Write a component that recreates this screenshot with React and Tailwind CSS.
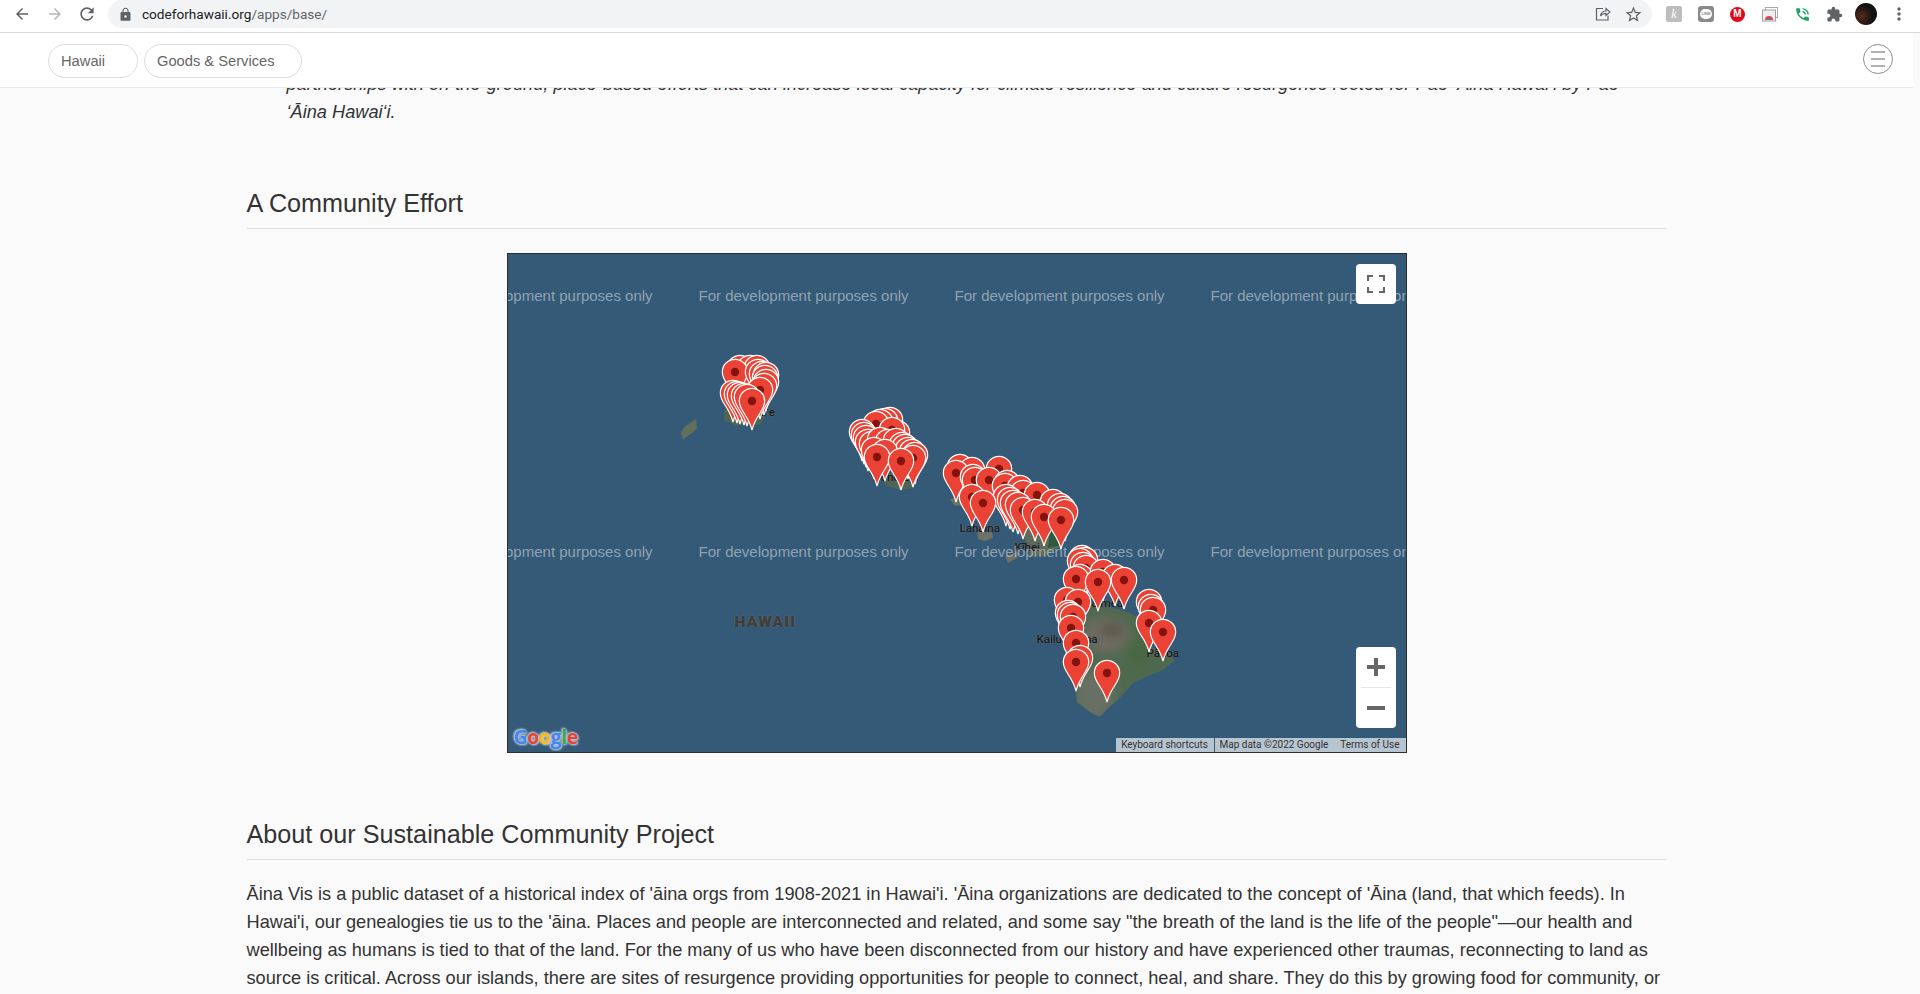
import React from "react";
import { MdArrowBack, MdArrowForward, MdRefresh, MdLock, MdStarBorder, MdExtension, MdPhoneInTalk, MdMoreVert } from "react-icons/md";

const PINS = [
  // Kauai
  [740,368],[750,368],[757,368],[735,372],[758,372],[762,374],[766,375],[765,378],[766,382],[764,386],[760,390],[733,393],[737,394],[740,395],[744,396],[747,397],[752,401],
  // Oahu
  [890,420],[885,421],[880,422],[876,424],[897,433],[892,430],[862,432],[864,435],[866,438],[868,442],[872,444],[880,440],[888,442],[896,441],[902,445],[905,447],[908,450],[912,452],[874,450],[885,452],[915,455],[913,458],[877,457],[901,461],
  // Maui nui
  [960,467],[972,470],[999,469],[956,473],[973,477],[975,480],[989,480],[1007,483],[1005,486],[1020,488],[1023,493],[1037,495],[1006,497],[972,497],[1010,500],[1013,503],[1018,505],[983,503],[1053,502],[1060,506],[1063,509],[1065,512],[1023,510],[1035,512],[1044,517],[1061,520],
  // Big Island
  [1082,558],[1085,560],[1080,561],[1083,565],[1086,568],[1080,577],[1076,579],[1067,600],[1078,602],[1103,572],[1115,577],[1068,613],[1070,615],[1073,617],[1149,602],[1151,607],[1153,610],[1071,628],[1098,582],[1124,580],[1076,643],[1149,623],[1163,632],[1080,658],[1076,662],[1107,673],
];

const LABELS = [
  ["Līhuʻe", 745, 412],
  ["Honolulu", 873, 477],
  ["Lahaina", 960, 528],
  ["Kīhei", 1015, 547],
  ["Waimea", 1082, 603],
  ["Kailua-Kona", 1037, 639],
  ["Pāhoa", 1147, 653],
];

function Pin({ x, y }) {
  return (
    <g transform={`translate(${x - 13.5} ${y - 13.5})`}>
      <path d="M13.5 0.8C6.5 0.8 0.8 6.5 0.8 13.5C0.8 23.5 10 27.5 13.5 42.5C17 27.5 26.2 23.5 26.2 13.5C26.2 6.5 20.5 0.8 13.5 0.8Z" fill="#ea4335" stroke="#ffffff" strokeWidth="1.2" />
      <circle cx="13.5" cy="13.5" r="4.2" fill="#84130f" />
    </g>
  );
}

function Islands() {
  return (
    <svg className="absolute inset-0" width="898" height="498" viewBox="508 254 898 498">
      <defs>
        <clipPath id="big">
          <path d="M1096 603L1113 608L1128 612L1137 617L1143 632L1153 648L1166 653L1175 660L1163 670L1148 676L1133 683L1118 700L1108 708L1100 717L1090 712L1077 702L1075 687L1083 672L1087 660L1083 633L1090 603Z" />
        </clipPath>
        <filter id="soft"><feGaussianBlur stdDeviation="5" /></filter>
      </defs>
      {/* Niihau */}
      <path d="M696 419L697 428L692 433L686 437L683 440L681 433L684 427L690 423Z" fill="#62705b" />
      {/* Kauai */}
      <path d="M724 410L745 405L765 415L760 425L735 425L724 420Z" fill="#4d6651" />
      {/* Oahu */}
      <path d="M880 470L905 478L915 488L900 490L885 485Z" fill="#4f6552" />
      {/* Molokai */}
      <path d="M950 499L978 496L985 502L955 506Z" fill="#6a7560" />
      {/* Lanai */}
      <path d="M977 532L992 532L993 538L985 541L978 539Z" fill="#6f7266" />
      {/* Maui */}
      <path d="M1022 530L1033 525L1040 537L1060 533L1062 545L1045 556L1030 556L1027 545Z" fill="#5c6c58" />
      <path d="M1050 532L1060 533L1062 545L1048 548Z" fill="#2f5a3e" />
      {/* Kahoolawe */}
      <path d="M1005 556L1018 552L1017 558L1008 563Z" fill="#6f7064" />
      {/* Big Island */}
      <g clipPath="url(#big)">
        <rect x="1070" y="600" width="110" height="120" fill="#4f694f" />
        <g filter="url(#soft)">
          <ellipse cx="1106" cy="635" rx="24" ry="18" fill="#6d6c60" />
          <ellipse cx="1112" cy="630" rx="12" ry="7" fill="#5f584c" />
          <ellipse cx="1095" cy="695" rx="20" ry="24" fill="#687064" />
          <ellipse cx="1140" cy="652" rx="14" ry="12" fill="#46673f" />
        </g>
      </g>
    </svg>
  );
}

function Pins() {
  return (
    <svg className="absolute inset-0" width="898" height="498" viewBox="508 254 898 498">
      {PINS.map(([x, y], i) => <Pin key={i} x={x} y={y} />)}
    </svg>
  );
}

function Watermark() {
  const rows = [296, 552];
  const cols = [443, 699, 955, 1211];
  return (
    <>
      {rows.map((r) => cols.map((c) => (
        <span key={`${r}-${c}`} className="absolute whitespace-nowrap text-[15px] leading-[18px] text-[#ffffff73] font-['Liberation_Sans',sans-serif]" style={{ left: c - 508, top: r - 254 - 9 }}>
          For development purposes only
        </span>
      )))}
    </>
  );
}

function MapBlock() {
  return (
    <div className="relative mx-auto h-[500px] w-[900px] overflow-hidden border border-[#2b2f33] bg-[#345a78]">
      <Islands />
      {LABELS.map(([t, x, y]) => (
        <span key={t} className="absolute whitespace-nowrap text-[11.5px] leading-[14px] text-[#111] font-['Roboto',sans-serif] [text-shadow:0_0_2px_#5f666a,0_0_3px_#5f666a]" style={{ left: x - 508, top: y - 254 - 7 }}>{t}</span>
      ))}
      <span className="absolute left-[227px] top-[359px] text-[15.5px] font-black leading-[18px] tracking-[1.2px] text-[#3f3d38] font-['Roboto',sans-serif] [text-shadow:0_0_2px_#6a6f72]">HAWAII</span>
      <Watermark />
      <Pins />
      <button className="absolute right-[10px] top-[10px] flex h-10 w-10 items-center justify-center rounded-sm bg-white">
        <svg width="18" height="18" viewBox="0 0 18 18" fill="none" stroke="#666" strokeWidth="2.2">
          <path d="M1 6V1H6M12 1H17V6M17 12V17H12M6 17H1V12" />
        </svg>
      </button>
      <div className="absolute bottom-[24px] right-[10px] flex h-[81px] w-10 flex-col items-center rounded-sm bg-white">
        <div className="flex h-10 items-center justify-center">
          <svg width="18" height="18" viewBox="0 0 18 18" fill="#666"><path d="M7 0H11V7H18V11H11V18H7V11H0V7H7Z" /></svg>
        </div>
        <div className="h-px w-[30px] bg-[#e6e6e6]" />
        <div className="flex h-10 items-center justify-center">
          <svg width="18" height="18" viewBox="0 0 18 18" fill="#666"><path d="M0 7H18V11H0Z" /></svg>
        </div>
      </div>
      <div className="absolute bottom-[3px] left-[6px] flex text-[19.5px] font-bold leading-[24px] tracking-[-0.4px] font-['Open_Sans',sans-serif] [text-shadow:0_0_2px_#b9c6d2,0_0_3px_#b9c6d2,1px_1px_2px_#b9c6d2,-1px_-1px_2px_#b9c6d2]">
        <span className="text-[#4285f4]">G</span><span className="text-[#ea4335]">o</span><span className="text-[#fbbc05]">o</span><span className="text-[#4285f4]">g</span><span className="text-[#34a853]">l</span><span className="text-[#ea4335]">e</span>
      </div>
      <div className="absolute bottom-0 right-0 flex h-[14px] items-center text-[10px] leading-[14px] text-[#333] font-['Roboto',sans-serif]">
        <span className="flex h-full w-[98px] items-center justify-center bg-[#b7c5d1]">Keyboard shortcuts</span>
        <span className="ml-px flex h-full w-[191px] items-center justify-between bg-[#b7c5d1] pl-[5px] pr-[6px]">
          <span>Map data ©2022 Google</span><span>Terms of Use</span>
        </span>
      </div>
    </div>
  );
}

function ShareIcon() {
  return (
    <svg width="16" height="16" viewBox="0 0 16 16" fill="none" stroke="#5f6368" strokeWidth="1.2">
      <path d="M8 2.5H1.5V14H13V9.5" />
      <path d="M5.5 10C6 6.5 8.5 5 11 5V2.5L15 6L11 9.5V7.3C8.7 7.2 7 8 5.5 10Z" />
    </svg>
  );
}

function ChromeBar() {
  return (
    <div className="flex h-[33px] w-full items-start border-b border-[#dadce0] bg-white">
      <div className="flex h-[28px] w-[108px] items-center">
        <span className="ml-[13px]"><MdArrowBack size={18} color="#5f6368" /></span>
        <span className="ml-[15px]"><MdArrowForward size={18} color="#b5b7ba" /></span>
        <span className="ml-[13px]"><MdRefresh size={20} color="#5f6368" /></span>
      </div>
      <div className="flex h-[28px] w-[1544px] items-center rounded-r-[14px] rounded-l-[14px] bg-[#f1f3f4]">
        <span className="ml-[10px]"><MdLock size={15} color="#5f6368" /></span>
        <span className="ml-[9px] whitespace-nowrap text-[13.6px] leading-[28px] text-[#202124] font-['Roboto',sans-serif]">codeforhawaii.org<span className="text-[#5f6368]">/apps/base/</span></span>
        <div className="ml-auto flex items-center gap-[13px] pr-[9px]">
          <ShareIcon />
          <MdStarBorder size={19} color="#5f6368" />
        </div>
      </div>
      <div className="flex h-[28px] flex-1 items-center">
        <span className="ml-[14px] flex h-4 w-4 items-center justify-center rounded-[2px] bg-[#bdbdbd] text-[12px] italic leading-none text-white font-['Liberation_Serif',serif]">k</span>
        <span className="ml-4 flex h-4 w-4 items-center justify-center rounded-[3px] bg-[#8a8a8a]">
          <span className="flex h-[10px] w-[12px] items-center justify-center rounded-full bg-white text-[4px] font-bold leading-none text-[#8a8a8a] font-['Liberation_Sans',sans-serif]">LINE</span>
        </span>
        <span className="ml-4 flex h-[15px] w-[15px] items-center justify-center rounded-full bg-[#e30613] text-[10px] font-bold leading-none text-white font-['Liberation_Sans',sans-serif]">M</span>
        <span className="ml-[17px] block">
          <svg width="16" height="15" viewBox="0 0 16 15">
            <rect x="3.5" y="0.5" width="12" height="10" fill="#fff" stroke="#a9a9a9" />
            <rect x="0.5" y="3" width="13" height="11" fill="#eee" stroke="#a0a0a0" />
            <path d="M3 13a4 4 0 0 1 8 0Z" fill="#ea4335" />
            <path d="M5 13a2 2 0 0 1 4 0Z" fill="#4285f4" />
          </svg>
        </span>
        <span className="ml-[16px]"><MdPhoneInTalk size={17} color="#1ea362" /></span>
        <span className="ml-[15px]"><MdExtension size={17} color="#5f6368" /></span>
        <span className="ml-[12px] block h-[22px] w-[22px] rounded-full bg-[radial-gradient(circle_at_30%_60%,#5a2a1c,#111_55%)]" />
        <span className="ml-[12px]"><MdMoreVert size={20} color="#5f6368" /></span>
      </div>
    </div>
  );
}

function Header() {
  return (
    <header className="flex h-[55px] w-[1913px] shrink-0 items-center border-b border-[#e9e9e9] bg-white pt-[2px] font-['Liberation_Sans',sans-serif]">
      <a className="ml-[48px] flex h-[34px] w-[90px] items-center rounded-[17px] border border-[#dedede] pl-[12px] text-[14.7px] text-[#666]">Hawaii</a>
      <a className="ml-[6px] flex h-[34px] w-[158px] items-center rounded-[17px] border border-[#dedede] pl-[12px] text-[14.7px] text-[#666]">Goods &amp; Services</a>
      <button className="ml-auto mr-[20px] -mt-[4px] flex h-[30px] w-[30px] flex-col items-center justify-center gap-[5px] rounded-full border border-[#8f8f8f]">
        <span className="block h-[2px] w-[14px] bg-[#b0b0b0]" />
        <span className="block h-[2px] w-[14px] bg-[#b0b0b0]" />
        <span className="block h-[2px] w-[14px] bg-[#b0b0b0]" />
      </button>
    </header>
  );
}

function SectionHeading({ children, className }) {
  return (
    <h2 className={`border-b border-[#dedede] pb-[11px] text-[25.2px] leading-[28px] text-[#333] ${className}`}>{children}</h2>
  );
}

export default function App() {
  return (
    <div className="flex h-[994px] w-full flex-col overflow-hidden bg-[#fafafa]">
      <ChromeBar />
      <Header />
      <main className="w-[1913px] flex-1 overflow-hidden font-['Liberation_Sans',sans-serif] text-[#333]">
        <div className="mx-auto w-[1420px]">
          <blockquote className="-mt-[18px] pl-[40px] pr-[40px] text-[18.2px] italic leading-[28px] text-[#333]">
            partnerships with on-the-ground, place-based efforts that can increase local capacity for climate resilience and culture resurgence rooted for Pae ‘Āina Hawai‘i by Pae ‘Āina Hawai‘i.
          </blockquote>
          <SectionHeading className="mt-[63px] mb-[24px]">A Community Effort</SectionHeading>
          <MapBlock />
          <SectionHeading className="mt-[67px] mb-[20px]">About our Sustainable Community Project</SectionHeading>
          <p className="text-[18.2px] leading-[28px] text-[#333]">
            Āina Vis is a public dataset of a historical index of 'āina orgs from 1908-2021 in Hawai'i. 'Āina organizations are dedicated to the concept of 'Āina (land, that which feeds). In Hawai'i, our genealogies tie us to the 'āina. Places and people are interconnected and related, and some say "the breath of the land is the life of the people"—our health and wellbeing as humans is tied to that of the land. For the many of us who have been disconnected from our history and have experienced other traumas, reconnecting to land as source is critical. Across our islands, there are sites of resurgence providing opportunities for people to connect, heal, and share. They do this by growing food for community, or restoring the lands and waters that sustain us.
          </p>
        </div>
      </main>
    </div>
  );
}
